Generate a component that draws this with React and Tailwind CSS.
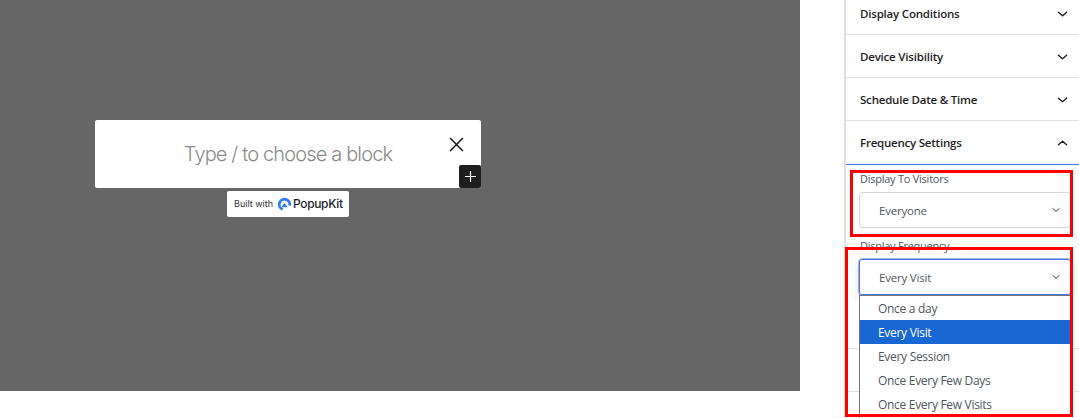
import React from "react";

const Chevron = ({ up = false, className = "" }) => (
  <svg viewBox="0 0 12 8" className={className} fill="none" stroke="currentColor" strokeWidth="1.5" strokeLinecap="round" strokeLinejoin="round">
    <path d={up ? "M1.5 6 L6 2 L10.5 6" : "M1.5 2 L6 6 L10.5 2"} />
  </svg>
);

const Row = ({ label, up }) => (
  <div className="flex h-[43px] items-center justify-between border-b border-[#e0e0e0] pl-[14px] pr-[11px] pt-[2px] text-[11.5px] font-semibold tracking-[-0.2px] text-[#1e1e1e]">
    <span>{label}</span>
    <Chevron up={up} className="h-[8px] w-[11px] text-[#1e1e1e]" />
  </div>
);

const Logo = () => (
  <svg viewBox="0 0 16 16" className="h-[15px] w-[15px]">
    <circle cx="8" cy="8" r="5.6" fill="none" stroke="#2f7cf6" strokeWidth="3" strokeDasharray="25 10" transform="rotate(110 8 8)" />
    <path d="M4.5 11 L8 6.5 L11.5 11 Z" fill="#2f7cf6" />
  </svg>
);

const options = ["Once a day", "Every Visit", "Every Session", "Once Every Few Days", "Once Every Few Visits"];

export default function App() {
  return (
    <div className="relative flex h-[418px] w-[1079px] overflow-hidden bg-white" style={{ fontFamily: '"Open Sans", "Noto Sans", sans-serif' }}>
      <div className="w-[800px] shrink-0">
        <div className="h-[391px] bg-[#666666] pl-[95px] pt-[120px]">
          <div className="relative flex h-[68px] w-[386px] items-center justify-center rounded-[2px] bg-white pb-[1px] text-[20px] font-light text-[#8a8a8a]" style={{ fontFamily: 'Inter, sans-serif' }}>
            <span className="tracking-[-0.85px]">Type / to choose a block</span>
            <svg viewBox="0 0 14 14" className="absolute right-[17px] top-[17px] h-[15px] w-[15px]" stroke="#111" strokeWidth="1.4" fill="none">
              <path d="M1 1 L13 13 M13 1 L1 13" />
            </svg>
            <div className="absolute bottom-0 right-0 flex h-[23px] w-[22px] items-center justify-center rounded-[2px] bg-[#1e1e1e]">
              <svg viewBox="0 0 12 12" className="h-[11px] w-[11px]" stroke="#fff" strokeWidth="1.3"><path d="M6 0 V12 M0 6 H12" /></svg>
            </div>
          </div>
          <div className="ml-[132px] mt-[3px] flex h-[26px] w-[122px] items-center rounded-[2px] bg-white pl-[7px] text-[#333]" style={{ fontFamily: 'Inter, sans-serif' }}>
            <span className="text-[9px]">Built with</span>
            <span className="ml-[4px] flex"><Logo /></span>
            <span className="ml-[1px] text-[12px] font-medium tracking-[-0.35px] text-[#1e1e2e]">PopupKit</span>
          </div>
        </div>
      </div>

      <div className="ml-[44px] h-full min-w-0 flex-1 border-l-2 border-[#e0e0e0]">
        <div className="-mt-[8px]">
          <Row label="Display Conditions" />
          <Row label="Device Visibility" />
          <Row label="Schedule Date &amp; Time" />
          <div className="flex h-[44px] items-center justify-between border-b border-[#4a72e8] pl-[14px] pr-[11px] pt-[1px] text-[11.5px] font-semibold tracking-[-0.22px] text-[#1e1e1e]">
            <span>Frequency Settings</span>
            <Chevron up className="h-[8px] w-[11px] text-[#1e1e1e]" />
          </div>
          <div className="h-[184px] border-b border-[#e0e0e0] pl-[13px] text-[11px] tracking-[-0.25px] text-[#50575e]">
            <div className="pl-[1px] pt-[6px] leading-[15px]">Display To Visitors</div>
            <div className="mt-[6px] flex h-[36px] w-[212px] items-center justify-between rounded-[3px] border border-[#d8d8d8] pl-[19px] pr-[10px] text-[11.5px] tracking-[-0.2px]">
              <span className="mt-[2px]">Everyone</span>
              <Chevron className="h-[6px] w-[8px] text-[#333]" />
            </div>
            <div className="mt-[10px] pl-[1px] leading-[15px]">Display Frequency</div>
            <div className="mt-[6px] flex h-[36px] w-[212px] items-center justify-between rounded-[3px] border border-[#4a72e8] pl-[19px] pr-[10px] text-[11.5px] tracking-[-0.2px] shadow-[0_0_0_0.5px_#4a72e8,0_4px_10px_rgba(0,0,0,0.12)]">
              <span className="mt-[2px]">Every Visit</span>
              <Chevron className="h-[6px] w-[8px] text-[#333]" />
            </div>
          </div>
          <div className="h-[43px] border-b border-[#e0e0e0]" />
        </div>
      </div>

      {/* native select list lying over the panel */}
      <div className="absolute left-[859px] top-[295px] h-[123px] w-[212px] border-l border-t border-[#767676] bg-white text-[12px] tracking-[-0.3px] text-[#50575e]">
        {options.map((o) => (
          <div key={o} className={`flex h-[24px] items-center pl-[18px] pt-[2px] ${o === "Every Visit" ? "bg-[#1967d2] text-white" : ""}`}>{o}</div>
        ))}
      </div>

      {/* red annotation boxes */}
      <div className="absolute left-[850px] top-[170px] h-[67px] w-[223px] border-[3px] border-[#ff0000]" />
      <div className="absolute left-[845px] top-[247px] h-[170px] w-[228px] border-[3px] border-[#ff0000]" />
    </div>
  );
}
